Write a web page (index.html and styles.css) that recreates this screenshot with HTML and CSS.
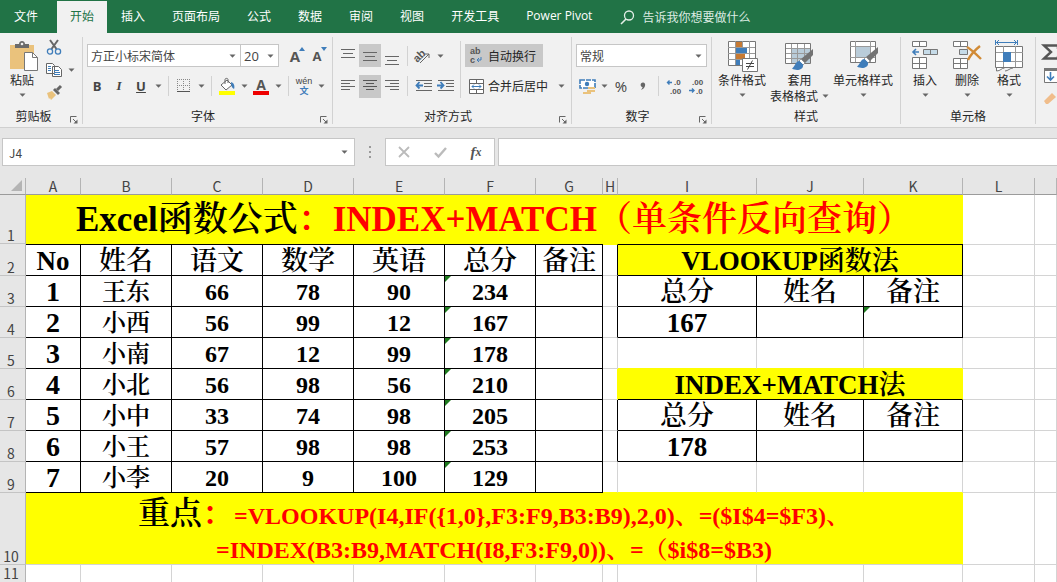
FILE: index.html
```html
<!DOCTYPE html>
<html lang="zh-CN">
<head>
<meta charset="utf-8">
<title>Excel函数公式</title>
<link rel="stylesheet" href="styles.css">
</head>
<body>
<svg class="defs" aria-hidden="true">
  <symbol id="down" viewBox="0 0 7 4"><path d="M0.5 0.5h6L3.5 3.8z" fill="#666"/></symbol>
  <symbol id="launch" viewBox="0 0 8 8"><path d="M0.5 6.5v-6h6M3 3l3 3" fill="none" stroke="#666"/><path d="M7.5 3.5v4h-4z" fill="#666"/></symbol>
  <symbol id="brush" viewBox="0 0 22 22"><path d="M21 0v6l-8 8-4-4z" fill="#737373"/><path d="M9 10l4 4-2 2-4-4z" fill="#fff" stroke="#777" stroke-width=".7"/><path d="M7.500 12c-4 0-4 5-7.500 7.500 5 3 12 1 11-4z" fill="#3f7dba"/></symbol>
</svg>

<nav class="tabs">
  <a class="tab file" href="#">文件</a>
  <a class="tab active" href="#">开始</a>
  <a class="tab" href="#">插入</a>
  <a class="tab" href="#">页面布局</a>
  <a class="tab" href="#">公式</a>
  <a class="tab" href="#">数据</a>
  <a class="tab" href="#">审阅</a>
  <a class="tab" href="#">视图</a>
  <a class="tab" href="#">开发工具</a>
  <a class="tab latin" href="#">Power Pivot</a>
  <button class="tell"><svg width="15" height="15" viewBox="0 0 15 15"><circle cx="9" cy="5.500" r="4.500" fill="none" stroke="#e4efe8" stroke-width="1.300"/><path d="M6 9L1 14" stroke="#e4efe8" stroke-width="1.600"/></svg>告诉我你想要做什么</button>
</nav>

<div class="ribbon">
  <section class="group clipboard">
    <div class="body">
      <button class="big paste"><svg width="34" height="31" viewBox="-4 0 34 31"><path d="M1 4h24v24H1z" fill="#eac27c"/><path d="M6 3h4c0-4 6-4 6 0h4v4H6z" fill="#6b6b6b"/><circle cx="13" cy="3" r="1.300" fill="#f1f1f1"/><path d="M15.500 11.500h8l5 5v13h-13z" fill="#fff" stroke="#777"/><path d="M23.500 11.500v5h5" fill="none" stroke="#777"/></svg><span>粘贴</span><svg class="arr"><use href="#down"/></svg></button>
      <div class="stack">
        <div class="row"><button class="tb" aria-label="剪切"><svg width="16" height="16" viewBox="0 0 16 16"><path d="M4 1l6.500 9M12 1L5.500 10" stroke="#666" stroke-width="2"/><circle cx="4" cy="12.500" r="2.600" fill="none" stroke="#3f7dba" stroke-width="1.300"/><circle cx="12" cy="12.500" r="2.600" fill="none" stroke="#3f7dba" stroke-width="1.300"/></svg></button></div>
        <div class="row"><button class="tb" aria-label="复制"><svg width="16" height="16" viewBox="0 0 16 16"><path d="M.500 1.500h6l2 2v8h-8zM6.500 4.500h6l3 3v7h-9z" fill="#fff" stroke="#666"/><path d="M2 4.500h3M2 6.500h3M2 8.500h3M8 8.500h5M8 10.500h6M8 12.500h6" stroke="#3f7dba"/></svg></button><button class="dd" aria-label="复制选项"><svg class="arr"><use href="#down"/></svg></button></div>
        <div class="row"><button class="tb" aria-label="格式刷"><svg width="16" height="16" viewBox="0 0 16 16"><path d="M1 8l5-2 4 4-5 5-1-2-1 1z" fill="#eac27c"/><path d="M7 5l2-2 5 5-2 2z" fill="#666"/><path d="M11 5l4-4" stroke="#666" stroke-width="3"/></svg></button></div>
      </div>
    </div>
    <div class="name"><span>剪贴板</span><svg class="launch"><use href="#launch"/></svg></div>
  </section>

  <section class="group font">
    <div class="body col">
      <div class="row first">
        <div class="combo family"><select aria-label="字体"><option>方正小标宋简体</option></select><svg class="arr"><use href="#down"/></svg></div>
        <div class="combo size"><select aria-label="字号"><option>20</option></select><svg class="arr"><use href="#down"/></svg></div>
        <button class="tb grow" aria-label="增大字号"><span class="glyph">A</span><svg class="tick" viewBox="0 0 6 4"><path d="M0 4h6L3 0z" fill="#3f7dba"/></svg></button>
        <button class="tb shrink" aria-label="减小字号"><span class="glyph">A</span><svg class="tick" viewBox="0 0 6 4"><path d="M0 0h6L3 4z" fill="#3f7dba"/></svg></button>
      </div>
      <div class="row">
        <button class="tb b">B</button><button class="tb i">I</button><button class="tb u">U</button><button class="dd" aria-label="下划线选项"><svg class="arr"><use href="#down"/></svg></button>
        <i class="sep"></i>
        <button class="tb" aria-label="边框"><svg width="14" height="14" viewBox="0 0 14 14"><path d="M.500 0v13M6.500 0v13M12.500 0v13M0 .500h13M0 6.500h13" stroke="#888" stroke-dasharray="1 1"/><path d="M0 12.500h13" stroke="#555"/></svg></button><button class="dd" aria-label="边框选项"><svg class="arr"><use href="#down"/></svg></button>
        <i class="sep"></i>
        <button class="tb" aria-label="填充颜色"><svg width="17" height="17" viewBox="0 0 17 17"><path d="M2 7l6-5 5 5-6 5z" fill="#fff" stroke="#666"/><path d="M6 6V1.500c0-1.500 3-1.500 3 0V5" fill="none" stroke="#666"/><path d="M12 4c3 1 4 4 3 7-2-1-3-3-3-7z" fill="#3f7dba"/><path d="M0 13h16v4H0z" fill="#ff0"/></svg></button><button class="dd" aria-label="填充选项"><svg class="arr"><use href="#down"/></svg></button>
        <button class="tb ink" aria-label="字体颜色"><span>A</span></button><button class="dd" aria-label="颜色选项"><svg class="arr"><use href="#down"/></svg></button>
        <i class="sep"></i>
        <button class="tb wen"><span>wén</span><span class="zh">文</span></button><button class="dd" aria-label="拼音选项"><svg class="arr"><use href="#down"/></svg></button>
      </div>
    </div>
    <div class="name"><span>字体</span><svg class="launch"><use href="#launch"/></svg></div>
  </section>

  <section class="group align">
    <div class="body">
      <div class="col">
        <div class="row first">
          <button class="tb" aria-label="顶端对齐"><svg width="14" height="18"><path d="M0 2.500h14M2 6.500h10M0 10.500h14" stroke="#666"/></svg></button><button class="tb on" aria-label="垂直居中"><svg width="14" height="18"><path d="M0 5.500h14M2 9.500h10M0 13.500h14" stroke="#666"/></svg></button><button class="tb" aria-label="底端对齐"><svg width="14" height="18"><path d="M0 9.500h14M2 13.500h10M0 17.500h14" stroke="#666"/></svg></button>
          <i class="sep"></i>
          <button class="tb" aria-label="方向"><svg width="18" height="18" viewBox="0 0 18 18"><text x="-1" y="12" transform="rotate(-45 6 9)" class="abtext slant">ab</text><path d="M6 16L15 7M11 7h4v4" fill="none" stroke="#666"/></svg></button><button class="dd" aria-label="方向选项"><svg class="arr"><use href="#down"/></svg></button>
        </div>
        <div class="row">
          <button class="tb" aria-label="左对齐"><svg width="14" height="14"><path d="M0 1.500h14M0 4.500h9M0 7.500h14M0 10.500h9" stroke="#666"/></svg></button><button class="tb on" aria-label="居中"><svg width="14" height="14"><path d="M0 1.500h14M3 4.500h8M0 7.500h14M3 10.500h8" stroke="#555"/></svg></button><button class="tb" aria-label="右对齐"><svg width="14" height="14"><path d="M0 1.500h14M5 4.500h9M0 7.500h14M5 10.500h9" stroke="#666"/></svg></button>
          <i class="sep"></i>
          <button class="tb" aria-label="减少缩进"><svg width="17" height="14"><path d="M1 1.500h16M9 4.500h8M9 7.500h8M1 11.500h16" stroke="#666"/><path d="M8 6.500H2M4.500 3L1.500 6.500l3 3" fill="none" stroke="#3f7dba" stroke-width="1.800"/></svg></button><button class="tb" aria-label="增加缩进"><svg width="17" height="14"><path d="M1 1.500h16M9 4.500h8M9 7.500h8M1 11.500h16" stroke="#666"/><path d="M0 6.500h6M3.500 3l3 3.500-3 3" fill="none" stroke="#3f7dba" stroke-width="1.800"/></svg></button>
        </div>
      </div>
      <i class="sep tall"></i>
      <div class="col">
        <div class="row first"><button class="text on"><svg width="15" height="17" viewBox="0 0 15 17"><text x="1" y="7" class="abtext">ab</text><text x="1" y="16" class="abtext">c</text><path d="M12 10v3H8M10 11l-2 2 2 2" fill="none" stroke="#3f7dba"/></svg>自动换行</button></div>
        <div class="row"><button class="text"><svg width="15" height="15" viewBox="0 0 15 15"><path d="M.500.500h14v14H.500zM.500 4.500h14M.500 10.500h14M7.500.500v4M7.500 10.500v4" fill="#fff" stroke="#666"/><path d="M3 7.500h9M5 5.500l-2 2 2 2M10 5.500l2 2-2 2" fill="none" stroke="#3f7dba"/></svg>合并后居中</button><button class="dd" aria-label="合并选项"><svg class="arr"><use href="#down"/></svg></button></div>
      </div>
    </div>
    <div class="name"><span>对齐方式</span><svg class="launch"><use href="#launch"/></svg></div>
  </section>

  <section class="group number">
    <div class="body col">
      <div class="row first"><div class="combo format"><select aria-label="数字格式"><option>常规</option></select><svg class="arr"><use href="#down"/></svg></div></div>
      <div class="row">
        <button class="tb" aria-label="会计数字格式"><svg width="17" height="17" viewBox="0 0 17 17"><path d="M1 2h15v8H1z" fill="#fff" stroke="#3f7dba" stroke-width="1.600" stroke-dasharray="5 1"/><circle cx="8" cy="6" r="2.200" fill="#3f7dba"/><path d="M9 9h7v2H9zM8 12h8v2H8zM4 14h8v2H4z" fill="#eac27c"/></svg></button><button class="dd" aria-label="货币选项"><svg class="arr"><use href="#down"/></svg></button><button class="tb pct">%</button><button class="tb" aria-label="千位分隔"><svg width="6" height="8" viewBox="0 0 6 8"><path d="M1 1.500C3-.5 6 1 5 4 4.500 6 3 7 1 8c1-1.500 1.500-2 1.500-3C1 5 0 3 1 1.500z" fill="#666"/></svg></button>
        <i class="sep"></i>
        <button class="tb" aria-label="增加小数位"><svg width="16" height="17" viewBox="0 0 16 17"><path d="M6 4.500H1.500M3.500 2.500l-2 2 2 2" fill="none" stroke="#3f7dba" stroke-width="1.400"/><text x="8" y="7" class="dec">.0</text><text x="4" y="16" class="dec">.00</text></svg></button><button class="tb" aria-label="减少小数位"><svg width="16" height="17" viewBox="0 0 16 17"><text x="4" y="7" class="dec">.00</text><text x="8" y="16" class="dec">.0</text><path d="M1 12.500h5M4 10.500l2 2-2 2" fill="none" stroke="#3f7dba" stroke-width="1.400"/></svg></button>
      </div>
    </div>
    <div class="name"><span>数字</span><svg class="launch"><use href="#launch"/></svg></div>
  </section>

  <section class="group styles">
    <div class="body">
      <button class="big cond"><svg width="31" height="31" viewBox="0 0 31 31"><path d="M1.500.500h27v24h-27z" fill="#fff" stroke="#777"/><path d="M8.500 0v24M15.500 0v24M22.500 0v24M1 6.500h27M1 12.500h27M1 18.500h27" stroke="#999"/><path d="M9 1h6v5H9zM9 13h9v5H9z" fill="#c77a33"/><path d="M9 7h11v5H9zM9 19h4v5H9z" fill="#3f7dba"/><path d="M15.500 17.500h15v13h-15z" fill="#fff" stroke="#777"/><path d="M19 22.500h8M19 25.500h8M25.500 19.500l-5 9" stroke="#444"/></svg><span>条件格式</span><svg class="arr"><use href="#down"/></svg></button>
      <button class="big tablefmt"><svg width="31" height="31" viewBox="0 0 31 31"><path d="M1.500 2.500h25v20h-25z" fill="#fff" stroke="#777"/><path d="M8 8h18v14H8z" fill="#b9ccd9"/><path d="M7.500 3v19M13.500 3v19M20.500 3v19M2 7.500h24M2 12.500h24M2 17.500h24" stroke="#999"/><use href="#brush" x="8" y="8" width="22" height="22"/></svg><span>套用</span><span class="line">表格格式<svg class="arr"><use href="#down"/></svg></span></button>
      <button class="big cellfmt"><svg width="31" height="31" viewBox="0 0 31 31"><path d="M2.500.500h25v21h-25z" fill="#fff" stroke="#777"/><path d="M7.500 0v21M22.500 0v21M2 5.500h25M2 16.500h25" stroke="#999"/><path d="M8 6h14v10H8z" fill="#b9ccd9"/><use href="#brush" x="9" y="6" width="22" height="22"/></svg><span>单元格样式</span><svg class="arr"><use href="#down"/></svg></button>
    </div>
    <div class="name"><span>样式</span></div>
  </section>

  <section class="group cells">
    <div class="body">
      <button class="big"><svg width="28" height="31" viewBox="0 0 28 31"><path d="M1.500.500h14v5h-14zM8.500.500v5M1.500 16.500h14v11h-14zM8.500 16.500v11M1.500 22.500h14" fill="#fff" stroke="#777"/><path d="M12.500 8.500h14v5h-14zM19.500 8.500v5" fill="#c6dbe8" stroke="#777"/><path d="M8 11H2.500M5 8l-3 3 3 3" fill="none" stroke="#3f7dba" stroke-width="1.600"/></svg><span>插入</span><svg class="arr"><use href="#down"/></svg></button>
      <button class="big"><svg width="30" height="31" viewBox="0 0 30 31"><path d="M1.500.500h14v5h-14zM8.500.500v5M1.500 17.500h14v10h-14zM8.500 17.500v10M1.500 22.500h14" fill="#fff" stroke="#777"/><path d="M7.500 8.500h8v5h-8z" fill="#c6dbe8" stroke="#777"/><path d="M15 6c5 3 9 7 14 12M28 5c-5 4-9 8-12 14" fill="none" stroke="#d18a35" stroke-width="2.400"/></svg><span>删除</span><svg class="arr"><use href="#down"/></svg></button>
      <button class="big"><svg width="28" height="31" viewBox="0 0 28 31"><path d="M.500 5.500h27v21H.500z" fill="#fff" stroke="#777"/><path d="M8.500 5v21M20.500 5v21M1 11.500h27M1 20.500h27" stroke="#999"/><path d="M8 11h8v10H8z" fill="#3f7dba"/><path d="M.500-1v5M22.500-1v5M1 1.500h21M4-1L1.500 1.500 4 4M19-1l2.500 2.500L19 4" fill="none" stroke="#3f7dba"/><path d="M1.500 27v3c4 0 5-3 8-3M10 30c3 0 5-3 8-3" fill="#fff" stroke="#777"/></svg><span>格式</span><svg class="arr"><use href="#down"/></svg></button>
    </div>
    <div class="name"><span>单元格</span></div>
  </section>

  <section class="group edit">
    <div class="stack">
      <button class="row" aria-label="自动求和"><svg width="18" height="17" viewBox="0 0 18 17"><path d="M18 5V1.500H4L11 8l-7 6.500h14V12" fill="none" stroke="#555" stroke-width="2.400"/></svg></button>
      <button class="row" aria-label="填充"><svg width="18" height="17" viewBox="0 0 18 17"><path d="M4.500 1.500h14v14h-14z" fill="#fff" stroke="#777"/><path d="M4 1h15v3H4z" fill="#777"/><path d="M10.500 5v8M7 9.500l3.500 3.500L14 9.500" fill="none" stroke="#3f7dba" stroke-width="1.600"/></svg></button>
      <button class="row" aria-label="清除"><svg width="18" height="17" viewBox="0 0 18 17"><path d="M4 11l8-8 4 4-8 7H6z" fill="#f0bd8b"/></svg></button>
    </div>
  </section>
</div>

<div class="formula">
  <div class="combo namebox"><input aria-label="名称框" value="J4"><svg class="arr"><use href="#down"/></svg></div>
  <svg class="dots" width="3" height="12"><path d="M0 1h2M0 6h2M0 11h2" stroke="#999" stroke-width="2"/></svg>
  <div class="fx">
    <button aria-label="取消"><svg width="12" height="10" viewBox="0 0 12 10"><path d="M1 0l10 10M11 0L1 10" stroke="#bbb" stroke-width="1.800"/></svg></button>
    <button aria-label="输入"><svg width="13" height="11" viewBox="0 0 13 11"><path d="M1 6l3.500 3.500L12 1" fill="none" stroke="#bbb" stroke-width="2.400"/></svg></button>
    <button class="fn">f<small>x</small></button>
  </div>
  <input class="entry" aria-label="编辑栏">
</div>

<table class="sheet">
  <colgroup><col class="c-num"><col class="c-a"><col class="c-d"><col class="c-d"><col class="c-d"><col class="c-d"><col class="c-d"><col class="c-g"><col class="c-h"><col class="c-i"><col class="c-j"><col class="c-k"><col class="c-l"><col></colgroup>
  <thead><tr><th class="corner"><svg width="12" height="12"><path d="M11 0v11H0z" fill="#b4b4b4"/></svg></th><th>A</th><th>B</th><th>C</th><th>D</th><th>E</th><th>F</th><th>G</th><th>H</th><th>I</th><th>J</th><th>K</th><th>L</th><th></th></tr></thead>
  <tbody>
  <tr class="r1"><th>1</th><td colspan="11" class="title"><b>Excel</b>函数公式<span class="red">：<b>INDEX+MATCH</b>（单条件反向查询）</span></td><td></td><td></td></tr>
  <tr class="r2"><th>2</th><td class="k lg"><b>No</b></td><td class="k lg">姓名</td><td class="k lg">语文</td><td class="k lg">数学</td><td class="k lg">英语</td><td class="k lg">总分</td><td class="k lg">备注</td><td class="edge lit"></td><td colspan="3" class="k lg y"><b>VLOOKUP</b>函数法</td><td></td><td></td></tr>
  <tr><th>3</th><td class="k no">1</td><td class="k">王东</td><td class="k n">66</td><td class="k n">78</td><td class="k n">90</td><td class="k n flag">234</td><td class="k"></td><td class="edge"></td><td class="k lg">总分</td><td class="k lg">姓名</td><td class="k lg">备注</td><td></td><td></td></tr>
  <tr><th>4</th><td class="k no">2</td><td class="k">小西</td><td class="k n">56</td><td class="k n">99</td><td class="k n">12</td><td class="k n flag">167</td><td class="k"></td><td class="edge"></td><td class="k lg n">167</td><td class="k"></td><td class="k flag"></td><td></td><td></td></tr>
  <tr><th>5</th><td class="k no">3</td><td class="k">小南</td><td class="k n">67</td><td class="k n">12</td><td class="k n">99</td><td class="k n flag">178</td><td class="k"></td><td></td><td class="under"></td><td class="under"></td><td class="under"></td><td></td><td></td></tr>
  <tr><th>6</th><td class="k no">4</td><td class="k">小北</td><td class="k n">56</td><td class="k n">98</td><td class="k n">56</td><td class="k n flag">210</td><td class="k"></td><td class="side"></td><td colspan="3" class="k lg y open"><b>INDEX+MATCH</b>法</td><td></td><td></td></tr>
  <tr><th>7</th><td class="k no">5</td><td class="k">小中</td><td class="k n">33</td><td class="k n">74</td><td class="k n">98</td><td class="k n flag">205</td><td class="k"></td><td class="edge"></td><td class="k lg">总分</td><td class="k lg">姓名</td><td class="k lg">备注</td><td></td><td></td></tr>
  <tr><th>8</th><td class="k no">6</td><td class="k">小王</td><td class="k n">57</td><td class="k n">98</td><td class="k n">98</td><td class="k n flag">253</td><td class="k"></td><td class="edge"></td><td class="k lg n">178</td><td class="k"></td><td class="k"></td><td></td><td></td></tr>
  <tr><th>9</th><td class="k no">7</td><td class="k">小李</td><td class="k n">20</td><td class="k n">9</td><td class="k n">100</td><td class="k n flag">129</td><td class="k"></td><td class="under"></td><td class="under"></td><td class="under"></td><td class="under"></td><td></td><td></td></tr>
  <tr class="r10"><th>10</th><td colspan="11" class="notes"><div class="note lead"><span class="key">重点<span class="red">：</span></span><b>=VLOOKUP(I4,IF({1,0},F3:F9,B3:B9),2,0)</b>、<b>=($I$4=$F3)</b>、</div><div class="note"><b>=INDEX(B3:B9,MATCH(I8,F3:F9,0))</b>、<b>=</b>（<b>$i$8=$B3)</b></div></td><td></td><td></td></tr>
  <tr class="r11"><th>11</th><td></td><td></td><td></td><td></td><td></td><td></td><td></td><td></td><td></td><td></td><td></td><td></td><td></td></tr>
  </tbody>
</table>
</body>
</html>
```
FILE: styles.css
```css
* { box-sizing: border-box; }
body {
  margin: 0;
  height: 100vh;
  overflow: hidden;
  background: #e6e6e6;
  color: #262626;
  font: 12px/16px "Noto Sans CJK SC", sans-serif;
}
button, select, input { font: inherit; color: inherit; border: 0; background: none; padding: 0; margin: 0; outline: 0; }
button { display: flex; align-items: center; justify-content: center; white-space: nowrap; flex: none; }
svg { display: block; flex: none; overflow: visible; }
.defs { position: absolute; width: 0; height: 0; }
.arr { width: 7px; height: 4px; }

/* tab strip */
.tabs { display: flex; align-items: flex-end; gap: 1px; height: 33px; background: #217346; white-space: nowrap; overflow: hidden; }
.tab { height: 32px; padding: 0 13px; line-height: 30px; color: #fff; text-decoration: none; }
.tab.file { padding: 0 18px 0 14px; }
.tab.active { background: #f1f1f1; color: #217346; }
.tab.latin { font-family: "Open Sans", sans-serif; }
.tell { height: 32px; gap: 7px; padding-left: 14px; color: #dcebe2; }

/* ribbon */
.ribbon { display: flex; height: 95px; background: #f1f1f1; border-bottom: 1px solid #d0d0d0; overflow: hidden; }
.group { flex: none; display: flex; flex-direction: column; justify-content: space-between; margin: 4px 0 3px; padding: 4px 4px 0; border-right: 1px solid #d2d2d2; }
.body { display: flex; }
.col { display: flex; flex-direction: column; gap: 7px; padding-top: 2px; }
.row { display: flex; align-items: center; height: 24px; }
.first { padding-top: 1px; }
.name { display: flex; align-items: center; height: 16px; line-height: 16px; }
.name span { flex: 1; text-align: center; }
.launch { width: 8px; height: 8px; align-self: flex-end; }
.clipboard { width: 83px; }
.font { width: 250px; padding: 4px 4px 0 3px; }
.align { width: 239px; }
.number { width: 140px; }
.styles { width: 189px; }
.edit { border: 0; }
.tb { width: 22px; height: 23px; }
.dd { width: 12px; height: 23px; }
.on { background: #c8c8c8; }
.sep { width: 1px; height: 20px; margin: 0 4px; background: #d2d2d2; }
.sep.tall { height: 57px; }
.text { height: 23px; gap: 4px; padding: 0 7px 0 4px; }
.abtext { font: bold 9px "Liberation Sans", sans-serif; fill: #555; }
.slant { font-size: 11px; }
.dec { font: bold 8px "Liberation Sans", sans-serif; fill: #555; }
.stack { display: flex; flex-direction: column; gap: 0; }
.stack .row { height: 23px; }
.clipboard .body { height: 65px; gap: 3px; }
.clipboard .stack { margin-top: -6px; }
.clipboard .name span { padding-right: 7px; flex: 1; }
.clipboard .name { padding-right: 0; }

.combo { position: relative; height: 23px; background: #fff; border: 1px solid #c6c6c6; color: #444; }
.combo select, .combo input { display: block; width: 100%; height: 100%; padding-left: 3px; appearance: none; }
.combo .arr { position: absolute; right: 4px; top: 9px; }
.family { width: 158px; margin-left: 1px; }
.size { width: 40px; font-family: "Open Sans", sans-serif; font-size: 13px; margin: 0 5px 0 -1px; }
.format { width: 132px; }
.grow, .shrink { position: relative; font: bold 15px/20px "Open Sans", sans-serif; color: #555; }
.shrink { font-size: 13px; }
.tick { position: absolute; right: 1px; top: 3px; width: 6px; height: 4px; }
.b, .i, .u { font: bold 13px/18px "Open Sans", sans-serif; color: #444; }
.i { font: italic bold 13px/18px "Liberation Serif", serif; }
.u { text-decoration: underline; }
.ink { font: bold 14px/13px "Open Sans", sans-serif; color: #555; }
.ink span { width: 16px; height: 17px; border-bottom: 4px solid #e00; }
.wen { flex-direction: column; font: 9px/9px "Liberation Sans", sans-serif; color: #444; }
.wen .zh { font: bold 9px/10px "Noto Sans CJK SC", sans-serif; color: #3f7dba; }
.pct { font: 15px/18px "Open Sans", sans-serif; color: #444; }

.big { flex-direction: column; justify-content: flex-start; width: 42px; height: 65px; line-height: 16px; }
.big > span + .arr { margin-top: 5px; }
.big > .line { display: flex; align-items: center; gap: 4px; line-height: 15px; }
.big.paste { width: 36px; }
.cond { width: 52px; }
.tablefmt { width: 63px; }
.cellfmt { width: 64px; }
.cells { width: 135px; padding: 4px 3px 0; }

/* formula bar */
.formula { display: flex; align-items: center; height: 50px; padding: 10px 0 12px 2px; }
.formula > * { height: 28px; }
.namebox { width: 353px; }
.namebox input { padding-left: 6px; }
.namebox .arr { top: 11px; right: 6px; }
.formula .dots { height: 12px; margin: 0 13px 0 14px; }
.fx { display: flex; width: 110px; background: #fff; border: 1px solid #c6c6c6; margin-right: 3px; }
.fx button { flex: 1; }
.fn { font: italic bold 15px/18px "Liberation Serif", serif; color: #555; }
.fn small { font-size: 12px; }
.entry { flex: 1; min-width: 0; background: #fff; border: 1px solid #c6c6c6; border-right: 0; padding: 0 6px; }

/* worksheet */
.sheet { width: 100%; table-layout: fixed; border-spacing: 0; background: #fff; color: #000; }
.c-num { width: 26px; } .c-a { width: 55px; } .c-d { width: 91px; } .c-g { width: 67px; } .c-h { width: 15px; }
.c-i { width: 139px; } .c-j { width: 107px; } .c-k { width: 99px; } .c-l { width: 72px; }
.sheet th { padding: 0; background: #e6e6e6; border-right: 1px solid #b4b4b4; border-bottom: 1px solid #c4c4c4; font: 400 14px/16px "Noto Sans CJK SC", sans-serif; color: #444; }
.sheet thead th { height: 17px; border-bottom-color: #9b9b9b; }
.sheet tbody th { vertical-align: bottom; padding-right: 3px; }
.corner svg { margin-left: 11px; }
.sheet td {
  position: relative; height: 31px; padding: 2px 0 0; text-align: center; vertical-align: middle; white-space: nowrap;
  border-right: 1px solid #d4d4d4; border-bottom: 1px solid #d4d4d4;
  font: 600 24px/28px "Liberation Serif", "Noto Serif CJK SC", "Noto Sans CJK SC", serif;
}
.sheet .k { border-color: #000; }
.sheet .edge { border-right-color: #000; }
.sheet .y { background: #ff0; }
.sheet .open { border-right-color: #ff0; }
.sheet .side { border-right-color: #ff0; }
.sheet .under { border-bottom-color: #ff0; }
.sheet .lg { font-size: 27px; }
.sheet .n { font-weight: 700; }
.sheet .no { font-weight: 700; font-size: 28px; }
.flag::before { content: ""; position: absolute; left: 0; top: 0; border-top: 6px solid #1e7a1e; border-right: 6px solid transparent; }
.red { color: #f00; }
.sheet .r1 td { height: 49px; padding: 0; border-bottom: 0; }
.sheet .r1 .title { background: #ff0; border-right-color: #ff0; font-size: 35px; line-height: 48px; }
.r2 td { border-top: 1px solid #d4d4d4; }
.sheet .lit { border-top-color: #ff0; }
.sheet .r2 td { height: 32px; }
.sheet .r10 td { height: 72px; }
.sheet .r10 .notes { background: #ff0; border-right-color: #ff0; vertical-align: bottom; padding: 0; }
.note { color: #f00; line-height: 28px; }
.lead { line-height: 40px; }
.key { font-size: 32px; line-height: 32px; color: #000; }
.sheet .r11 td, .sheet .r11 th { height: 17px; padding-top: 0; padding-bottom: 0; border-bottom: 0; line-height: 17px; }
```
